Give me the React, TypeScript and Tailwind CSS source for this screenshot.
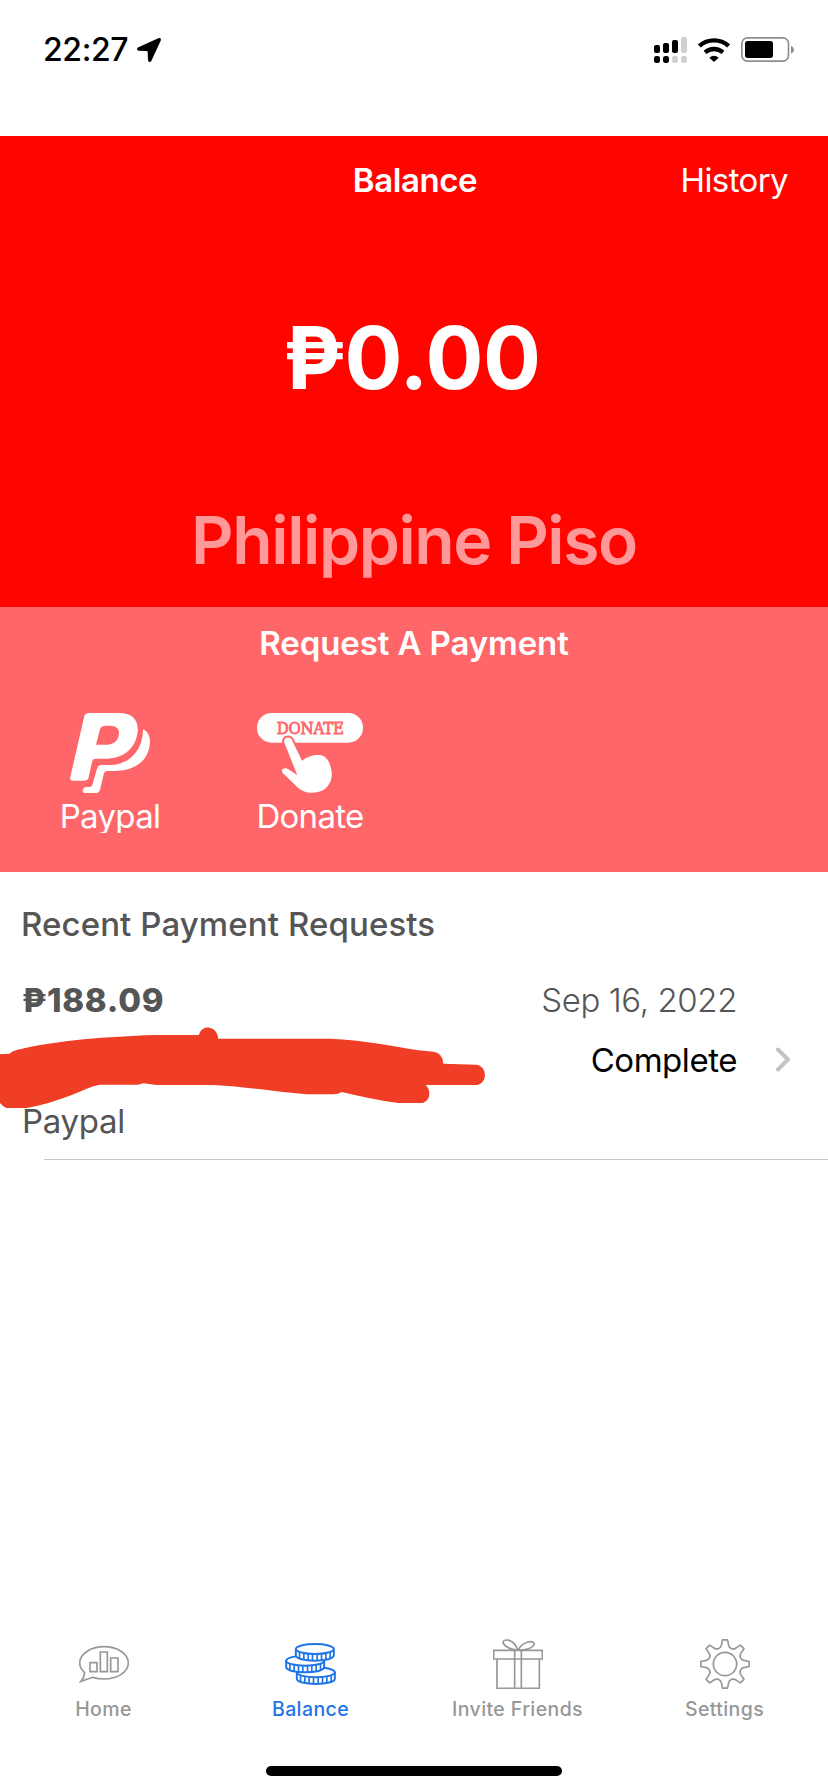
import React from 'react';

const TEETH = 8;

// Builds the outline of the settings gear around the origin
const gearPath = () => {
  const at = (r: number, deg: number) => {
    const a = ((deg - 90) * Math.PI) / 180;
    return `${(r * Math.cos(a)).toFixed(1)} ${(r * Math.sin(a)).toFixed(1)}`;
  };
  let d = `M${at(73, -6)}`;
  for (let i = 0; i < TEETH; i++) {
    const t = i * 45;
    d += `L${at(73, t - 6)}L${at(73, t + 6)}L${at(57, t + 11)}Q${at(51, t + 14)} ${at(50, t + 22.5)}Q${at(51, t + 31)} ${at(57, t + 34)}`;
  }
  return `${d}Z`;
};

const LocationIcon = () => (
  <svg className="w-6 h-6" viewBox="0 0 72 72" fill="currentColor">
    <path d="M64 1Q74-2 71 8L44 67Q41 73 37 72Q33 71 33 66L32 42Q32 39 29 39L5 38Q0 37 0 33Q0 30 4 28Z" />
  </svg>
);

const SignalIcon = () => (
  <svg className="w-[33px] h-[26px]" viewBox="165 111 99 78">
    <rect x="165" y="135" width="18" height="24" rx="6" />
    <rect x="192" y="129" width="18" height="30" rx="6" />
    <rect x="219" y="120" width="18" height="39" rx="6" />
    <rect x="246" y="111" width="18" height="48" rx="6" fill="#d0d0d0" />
    <rect x="165" y="168" width="18" height="21" rx="7" />
    <rect x="192" y="168" width="18" height="21" rx="7" />
    <rect x="219" y="168" width="18" height="21" rx="7" fill="#d0d0d0" />
    <rect x="246" y="168" width="18" height="21" rx="7" fill="#d0d0d0" />
  </svg>
);

const WifiIcon = () => (
  <svg className="w-8 h-6" viewBox="299 111 96 72" fill="none" stroke="#000" strokeWidth="13">
    <path d="M303 135Q321 118 347 118Q373 118 391 135" />
    <path d="M320 154Q332 144 347 144Q362 144 374 154" />
    <path d="M333 170Q347 159 361 170L347 183Z" fill="#000" stroke="none" />
  </svg>
);

const BatteryIcon = () => (
  <svg className="w-[53px] h-[25px]" viewBox="423 111 159 75">
    <rect x="425.500" y="113.500" width="140" height="70" rx="17" fill="none" stroke="#8e8e8e" strokeWidth="5" />
    <rect x="435" y="123" width="84" height="51" rx="8" />
    <path d="M573 137Q582 141 582 149Q582 157 573 161Z" fill="#8e8e8e" />
  </svg>
);

const PaypalIcon = () => (
  <svg className="w-20 h-20" viewBox="90 69 240 240" fill="#fff">
    <path
      fillRule="evenodd"
      d="M133 78Q136 69 147 69H236C275 69 296 88 293 124C289 173 252 206 200 206H168Q158 206 156 216L146 262Q144 272 134 272H97Q88 272 91 261ZM180 118Q183 107 196 107H210C228 107 238 116 237 130C236 152 222 164 200 164H168Z"
    />
    <path d="M309 118C322 122 330 138 330 155C328 208 290 243 220 243H203Q193 243 191 253L180 299Q177 309 167 309H134Q127 309 128 302Q130 292 138 291H148Q156 291 158 282L171 236Q174 226 185 225H215C270 222 309 180 309 118Z" />
  </svg>
);

const DonateIcon = () => (
  <svg className="w-[106px] h-20" viewBox="651 69 318 240">
    <rect x="651" y="69" width="318" height="89" rx="44" fill="#fff" />
    <text
      x="710"
      y="132"
      fill="#ff6669"
      stroke="#ff6669"
      strokeWidth="2.500"
      fontSize="49"
      textLength="201"
      lengthAdjust="spacingAndGlyphs"
      className="font-['DejaVu_Serif',serif]"
    >
      DONATE
    </text>
    <path
      d="M733 158C728 142 749 137 756 150L786 212C800 200 820 194 838 195C864 197 871 222 875 245C878 277 860 302 830 307C800 312 780 301 765 284L728 249C720 238 734 230 745 238L772 256Z"
      fill="#fff"
      stroke="#ff6669"
      strokeWidth="12"
      paintOrder="stroke"
    />
  </svg>
);

const HomeIcon = () => (
  <svg className="w-[50px] h-[50px]" viewBox="87 57 150 150" fill="none" stroke="currentColor" strokeWidth="5">
    <path d="M104 158C94 149 89 141 89 129C89 102 122 80 162 80C203 80 235 102 235 129C235 156 203 177 162 177C149 177 138 175 128 172L93 184Q103 172 104 158Z" />
    <path d="M120 128H141V155H120ZM151 96H172V155H151ZM182 114H204V155H182Z" />
  </svg>
);

const Coin = ({ x, y }: { x: number; y: number }) => (
  <g transform={`translate(${x} ${y})`}>
    <path d="M-57 0V19C-57 29-31 35 0 35S57 29 57 19V0" fill="#fff" />
    <path
      d="M-46 8V28M-33 12V31M-20 14V33M-7 15V34M7 15V34M20 14V33M33 12V31M46 8V28"
      strokeWidth="5"
    />
    <ellipse rx="57" ry="15" fill="#fff" />
  </g>
);

const BalanceIcon = () => (
  <svg className="w-[52px] h-[50px]" viewBox="706 57 153 150" fill="none" stroke="currentColor" strokeWidth="6">
    <Coin x={797} y={157} />
    <Coin x={765} y={122} />
    <Coin x={794} y={87} />
  </svg>
);

const GiftIcon = () => (
  <svg className="w-[50px] h-[50px]" viewBox="189 57 150 150" fill="none" stroke="currentColor" strokeWidth="5">
    <path d="M191 91H337V117H191ZM201 117V205H328V117M254 91V205M274 91V205" />
    <path d="M263 90C250 91 222 82 219 66C221 56 252 55 263 90ZM265 90C277 91 309 88 313 71C308 61 278 63 265 90Z" />
  </svg>
);

const SettingsIcon = () => (
  <svg className="w-[50px] h-[50px]" viewBox="-75 -75 150 150" fill="none" stroke="currentColor" strokeWidth="5">
    <path d={gearPath()} strokeLinejoin="round" />
    <circle r="35" />
  </svg>
);

const tabs = [
  { label: 'Home', Icon: HomeIcon },
  { label: 'Balance', Icon: BalanceIcon, active: true },
  { label: 'Invite Friends', Icon: GiftIcon },
  { label: 'Settings', Icon: SettingsIcon },
];

export default function App() {
  return (
    <div className="flex flex-col w-[828px] h-[1792px] overflow-hidden bg-white text-black font-[Inter,sans-serif]">
      {/* Status bar */}
      <div className="flex items-center justify-between h-[99px] mb-[37px] pl-[43px] pr-[34px] shrink-0">
        <div className="flex items-center gap-[9px]">
          <span className="text-[32px] font-medium tracking-[-0.400px]">22:27</span>
          <LocationIcon />
        </div>
        <div className="flex items-center gap-[11px]">
          <SignalIcon />
          <WifiIcon />
          <BatteryIcon />
        </div>
      </div>

      {/* Balance header */}
      <header className="h-[471px] shrink-0 bg-[#ff0500] text-white">
        <div className="grid grid-cols-3 items-center h-[88px] px-[40px] pt-px text-[33px]">
          <h1 className="col-start-2 pl-[2px] text-center font-semibold tracking-[-0.400px]">Balance</h1>
          <button className="text-right tracking-[-0.600px]">History</button>
        </div>
        <div className="flex items-center justify-center h-[269px] pr-[4px] text-[86px] font-bold tracking-[-0.400px]">
          ₱0.00
        </div>
        <div className="flex items-center justify-center h-[94px] text-[66px] font-semibold tracking-[-1.400px] text-[#ff9999]">
          Philippine Piso
        </div>
      </header>

      {/* Payment methods */}
      <section className="h-[265px] shrink-0 bg-[#ff6669] text-white">
        <h2 className="flex items-center justify-center h-[72px] pt-px text-[33px] font-semibold tracking-[-0.100px]">
          Request A Payment
        </h2>
        <div className="flex pl-[10px] pt-[34px] text-[33px] tracking-[-0.700px]">
          <button className="flex flex-col items-center w-[200px]">
            <PaypalIcon />
            <span className="h-[40px] overflow-hidden leading-[46px]">Paypal</span>
          </button>
          <button className="flex flex-col items-center w-[200px]">
            <DonateIcon />
            <span className="leading-[46px]">Donate</span>
          </button>
        </div>
      </section>

      {/* Recent requests */}
      <section className="text-[33px] text-[#555]">
        <h2 className="flex items-center h-[104px] pl-[21px] pt-px font-medium tracking-[0.100px]">
          Recent Payment Requests
        </h2>
        <div className="flex justify-between h-[183px] pl-[22px]">
          <div>
            <div className="leading-[48px] font-extrabold tracking-[0.700px]">₱188.09</div>
            <div className="relative h-[72px]">
              <svg className="absolute -left-[22px] top-[3px] w-[486px] h-[82px]" viewBox="0 411 1458 246" fill="#f03e26">
                <path d="M0 493L28 491Q36 483 50 480C170 450 330 440 460 435H597C603 404 650 403 655 446H990C1090 450 1180 468 1255 481L1300 485Q1329 489 1330 521L1430 524C1463 530 1463 580 1430 585H1277C1297 604 1288 636 1265 639H1195C1140 632 1080 620 1025 606Q1015 613 1000 613H920C830 606 740 590 640 585H470L430 580L415 584H300Q280 587 260 596C200 622 140 643 80 654H20Q12 652 0 639Z" />
              </svg>
            </div>
            <div className="leading-[50px] tracking-[-0.300px]">Paypal</div>
          </div>
          <div className="flex">
            <div className="text-right">
              <div className="leading-[48px] font-light tracking-[-0.400px]">Sep 16, 2022</div>
              <div className="leading-[72px] text-black tracking-[-0.450px]">Complete</div>
            </div>
            <svg
              className="w-[15px] h-[25px] mt-[71px] ml-[39px] mr-[37px]"
              viewBox="0 0 15 25"
              fill="none"
              stroke="#c4c4c6"
              strokeWidth="4"
              strokeLinecap="round"
              strokeLinejoin="round"
            >
              <path d="M2 2.500L12 12.500L2 22.500" />
            </svg>
          </div>
        </div>
        <div className="h-px ml-[44px] bg-[#c6c6c8]" />
      </section>

      {/* Tab bar */}
      <nav className="grid grid-cols-4 mt-auto mb-[37px] shrink-0">
        {tabs.map(({ label, Icon, active }) => (
          <button
            key={label}
            className={`flex flex-col items-center ${active ? 'text-[#1f74e8]' : 'text-[#979797]'}`}
          >
            <Icon />
            <span className="text-[19.500px] leading-[40px] font-medium tracking-[0.400px]">{label}</span>
          </button>
        ))}
      </nav>
      <div className="w-[296px] h-[10px] mx-auto mb-4 shrink-0 rounded-full bg-black" />
    </div>
  );
}
